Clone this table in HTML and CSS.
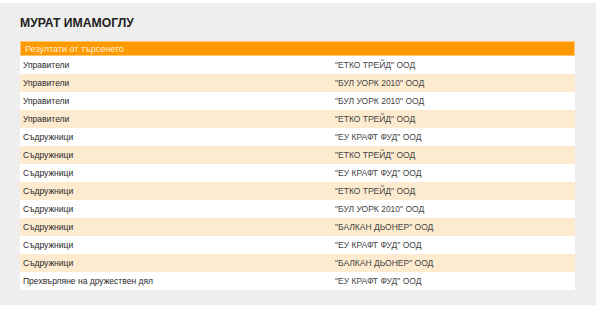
FILE: index.html
```html
<!DOCTYPE html>
<html>
<head>
<meta charset="utf-8">
<link rel="stylesheet" href="styles.css">
</head>
<body>
<div class="panel">
  <h1 class="title">МУРАТ ИМАМОГЛУ</h1>
  <table class="results">
    <thead>
      <tr><th colspan="2">Резултати от търсенето</th></tr>
    </thead>
    <tbody>
      <tr><td class="c1">Управители</td><td class="c2">"ЕТКО ТРЕЙД" ООД</td></tr>
      <tr><td class="c1">Управители</td><td class="c2">"БУЛ УОРК 2010" ООД</td></tr>
      <tr><td class="c1">Управители</td><td class="c2">"БУЛ УОРК 2010" ООД</td></tr>
      <tr><td class="c1">Управители</td><td class="c2">"ЕТКО ТРЕЙД" ООД</td></tr>
      <tr><td class="c1">Съдружници</td><td class="c2">"ЕУ КРАФТ ФУД" ООД</td></tr>
      <tr><td class="c1">Съдружници</td><td class="c2">"ЕТКО ТРЕЙД" ООД</td></tr>
      <tr><td class="c1">Съдружници</td><td class="c2">"ЕУ КРАФТ ФУД" ООД</td></tr>
      <tr><td class="c1">Съдружници</td><td class="c2">"ЕТКО ТРЕЙД" ООД</td></tr>
      <tr><td class="c1">Съдружници</td><td class="c2">"БУЛ УОРК 2010" ООД</td></tr>
      <tr><td class="c1">Съдружници</td><td class="c2">"БАЛКАН ДЬОНЕР" ООД</td></tr>
      <tr><td class="c1">Съдружници</td><td class="c2">"ЕУ КРАФТ ФУД" ООД</td></tr>
      <tr><td class="c1">Съдружници</td><td class="c2">"БАЛКАН ДЬОНЕР" ООД</td></tr>
      <tr><td class="c1">Прехвърляне на дружествен дял</td><td class="c2">"ЕУ КРАФТ ФУД" ООД</td></tr>
    </tbody>
  </table>
</div>
</body>
</html>
```

FILE: styles.css
```css
html, body {
  margin: 0;
  padding: 0;
  background: #ffffff;
  font-family: "Liberation Sans", Arial, sans-serif;
}

.panel {
  margin-top: 3px;
  width: 555px;
  padding: 13px 21px 15px 20px;
  background: #eeeeee;
}

.title {
  margin: 0 0 11px 0;
  font-size: 12.2px;
  line-height: 14px;
  font-weight: bold;
  color: #222222;
}

.results {
  width: 555px;
  border-collapse: collapse;
  font-size: 8.5px;
}

.results th {
  height: 15px;
  padding: 0 5px;
  text-align: left;
  font-size: 9px;
  font-weight: normal;
  color: #fff3dc;
  background: #ff9900;
  box-shadow: inset 0 0 0 1px #ffc870;
}

.results td {
  height: 18px;
  padding: 0 3px;
  color: #2a2a2a;
}

.results .c1 {
  width: 306px;
}

.results .c2 {
  color: #444444;
}

.results tbody tr:nth-child(odd) {
  background: #ffffff;
}

.results tbody tr:nth-child(even) {
  background: #fdebd0;
}
```
